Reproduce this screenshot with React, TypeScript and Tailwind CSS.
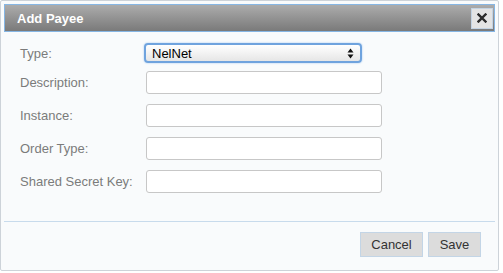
import React from "react";

const font = { fontFamily: '"Liberation Sans", Arial, sans-serif' };

function Row({ label, children }: { label: string; children: React.ReactNode }) {
  return (
    <div className="flex items-center h-[23px] mb-[10px]">
      <div className="w-[126px] text-[13px] text-[#7b7b7b] leading-none">{label}</div>
      {children}
    </div>
  );
}

function TextInput() {
  return <div className="w-[236px] h-[23px] bg-white border border-[#c7c7c7] rounded-[3px]" />;
}

export default function App() {
  return (
    <div style={font} className="w-[503px] h-[273px] bg-white">
      <div className="w-[499px] h-[271px] border border-[#cdd3d9] rounded-[2px] bg-[#f9fbfc] flex flex-col p-[3px]">
        <div className="h-[28px] border border-[#86b6e4] bg-gradient-to-b from-[#acacac] to-[#7a7a7a] flex items-center justify-between pl-[12px] pr-[1px]">
          <span className="text-white font-bold text-[13px] leading-none">Add Payee</span>
          <div className="w-[22px] h-[21px] bg-[#e4e4e4] border border-[#c3d3e3] flex items-center justify-center">
            <svg width="10" height="10" viewBox="0 0 10 10">
              <path d="M1.5 1.5 L8.5 8.5 M8.5 1.5 L1.5 8.5" stroke="#2b2b2b" strokeWidth="2.4" strokeLinecap="square" />
            </svg>
          </div>
        </div>
        <div className="flex-1 pl-[16px] pt-[11px]">
          <div className="flex items-center h-[20px] mb-[8px]">
            <div className="w-[124px] text-[13px] text-[#7b7b7b] leading-none">Type:</div>
            <div className="w-[218px] h-[20px] rounded-[4px] border-2 border-[#6fa3de] bg-gradient-to-b from-[#ffffff] to-[#e6e6e6] flex items-center justify-between pl-[6px] pr-[6px] shadow-[0_0_2px_#9cc3ee]">
              <span className="text-[13px] text-black leading-none">NelNet</span>
              <svg width="7" height="11" viewBox="0 0 7 11">
                <path d="M3.5 0.5 L6.5 4.5 L0.5 4.5 Z" fill="#111" />
                <path d="M3.5 10.5 L6.5 6.5 L0.5 6.5 Z" fill="#111" />
              </svg>
            </div>
          </div>
          <Row label="Description:"><TextInput /></Row>
          <Row label="Instance:"><TextInput /></Row>
          <Row label="Order Type:"><TextInput /></Row>
          <Row label="Shared Secret Key:"><TextInput /></Row>
        </div>
        <div className="h-[46px] border-t border-[#c8dbec] flex items-start justify-end pt-[10px] pr-[14px] gap-[5px]">
          <button className="w-[63px] h-[25px] bg-[#dcdcdc] border border-[#c3d5e6] text-[13px] text-[#333]">Cancel</button>
          <button className="w-[53px] h-[25px] bg-[#dcdcdc] border border-[#c3d5e6] text-[13px] text-[#333]">Save</button>
        </div>
      </div>
    </div>
  );
}
